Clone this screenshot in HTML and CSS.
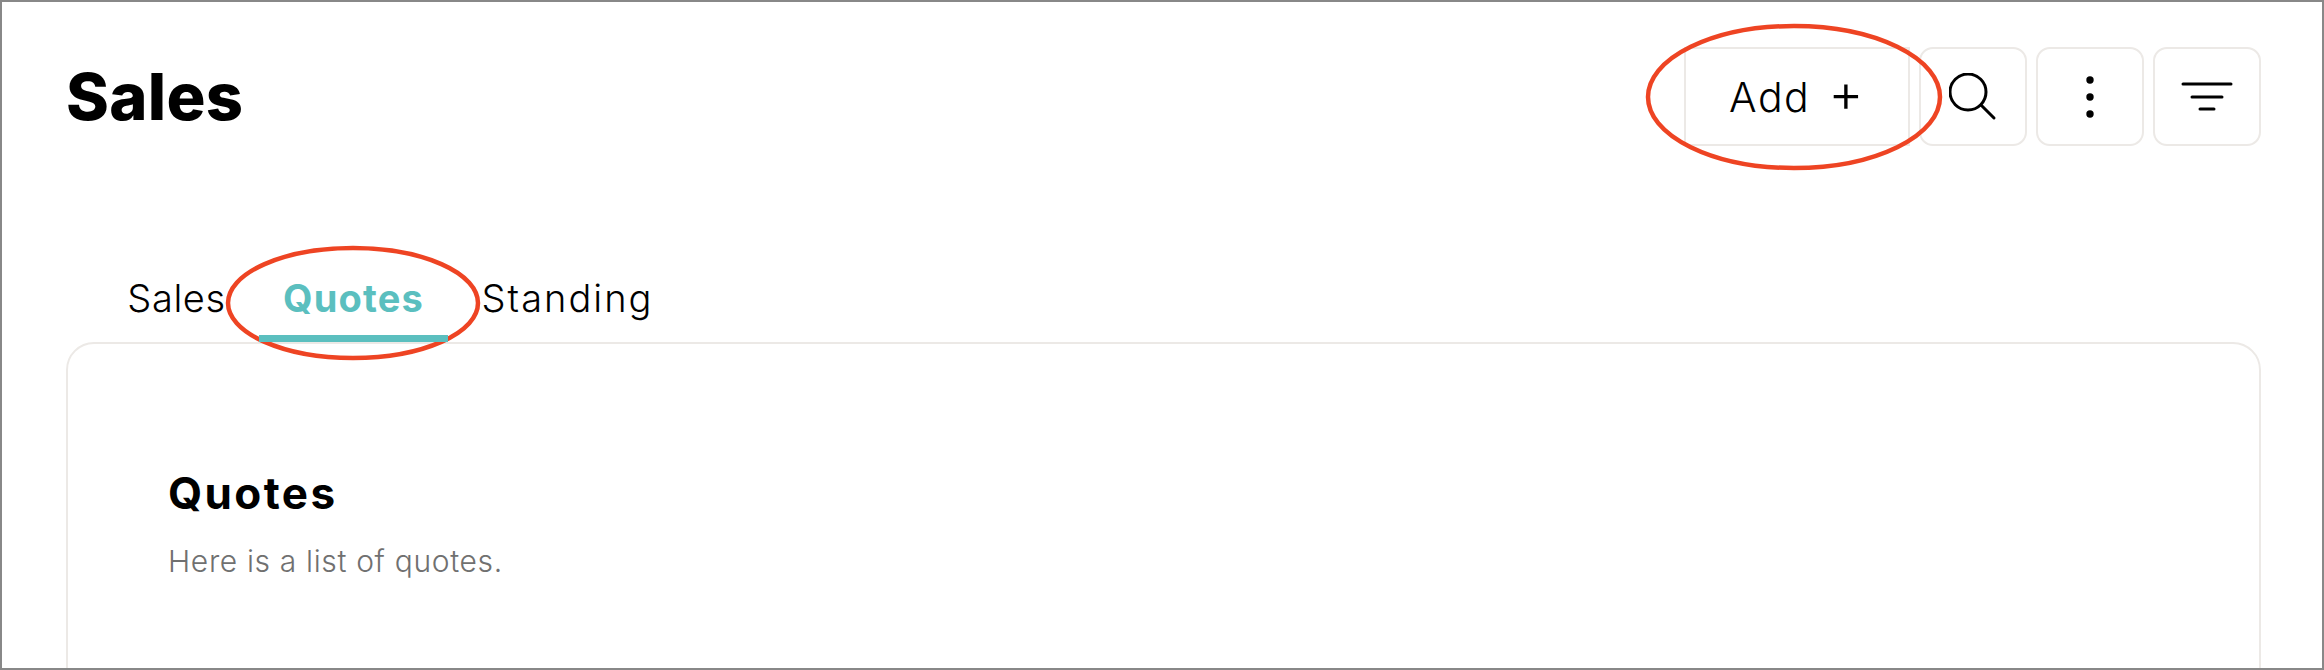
FILE: index.html
```html
<!DOCTYPE html>
<html lang="en">
<head>
    <meta charset="UTF-8">
    <meta name="viewport" content="width=device-width, initial-scale=1.0">
    <title>Sales</title>
    <link rel="stylesheet" href="styles.css">
</head>
<body>
    <div class="frame">
        <header class="page-header">
            <h1>Sales</h1>
            <div class="actions">
                <button class="action add-btn">Add <span class="plus">+</span></button>
                <button class="action icon-btn search-btn" aria-label="Search">
                    <svg width="52" height="52" viewBox="0 0 52 52" fill="none" stroke="#000" stroke-width="3" stroke-linecap="round">
                        <circle cx="19" cy="19" r="18"/>
                        <path d="M32 32 L45 45"/>
                    </svg>
                </button>
                <button class="action icon-btn" aria-label="More">
                    <svg width="10" height="44" viewBox="0 0 10 44" fill="#000">
                        <circle cx="5" cy="5" r="3.7"/>
                        <circle cx="5" cy="22" r="3.7"/>
                        <circle cx="5" cy="39" r="3.7"/>
                    </svg>
                </button>
                <button class="action icon-btn" aria-label="Filter">
                    <svg width="52" height="30" viewBox="0 0 52 30" fill="none" stroke="#000" stroke-width="3" stroke-linecap="round">
                        <path d="M2 2 H50"/>
                        <path d="M11 15 H41"/>
                        <path d="M19 27 H33"/>
                    </svg>
                </button>
            </div>
        </header>

        <nav class="tabs">
            <a class="tab tab-sales">Sales</a>
            <a class="tab tab-quotes active">Quotes</a>
            <a class="tab tab-standing">Standing</a>
        </nav>

        <section class="card">
            <h2>Quotes</h2>
            <p>Here is a list of quotes.</p>
        </section>

        <!-- red annotation rings -->
        <svg class="rings" width="2324" height="670" fill="none" stroke="#ee4423" stroke-width="4.5">
            <ellipse cx="1794" cy="97" rx="146" ry="71"/>
            <ellipse cx="353" cy="303" rx="125" ry="55"/>
        </svg>
    </div>
</body>
</html>
```

FILE: styles.css
```css
* {
    margin: 0;
    padding: 0;
    box-sizing: border-box;
    font-family: Inter, 'Noto Sans', sans-serif;
}

html, body {
    height: 100%;
    overflow: hidden;
    background: #fff;
    color: #000;
}

.frame {
    position: relative;
    height: 670px;
    border: 2px solid #888;
    padding: 45px 61px 0 64px;
    overflow: hidden;
}

.page-header {
    display: flex;
    justify-content: space-between;
    align-items: center;
    height: 99px;
}

h1 {
    font-size: 65px;
    font-weight: 800;
    letter-spacing: 0.3px;
}

.actions {
    display: flex;
    gap: 9px;
}

.action {
    display: flex;
    align-items: center;
    justify-content: center;
    height: 99px;
    width: 108px;
    background: #fff;
    border: 2px solid #ece9e6;
    border-radius: 14px;
}

.add-btn {
    width: 226px;
    border-radius: 0;
    font-size: 41px;
    font-weight: 300;
    letter-spacing: 1.5px;
    gap: 18px;
}

.plus {
    font-size: 54px;
    font-weight: 300;
    line-height: 1;
    margin-top: -8px;
}

.search-btn svg {
    margin: 4px 0 0 4px;
}

.tabs {
    display: flex;
    gap: 35px;
    margin: 96px 0 0 63px;
    height: 102px;
    align-items: stretch;
}

.tab {
    display: flex;
    justify-content: center;
    font-size: 38px;
    font-weight: 300;
    letter-spacing: 1.6px;
    padding-top: 33px;
    height: 100px;
    white-space: nowrap;
}

.tab-sales { width: 95px; letter-spacing: 0.6px; }
.tab-quotes { width: 189px; }
.tab-standing { width: 169px; letter-spacing: 2px; }

.tab.active {
    color: #5bbfbf;
    font-weight: 700;
    letter-spacing: 1.2px;
    border-bottom: 7px solid #5bbfbf;
    position: relative;
    z-index: 1;
}

.card {
    height: 500px;
    margin-top: -2px;
    border: 2px solid #ece9e6;
    border-radius: 28px;
    padding: 121px 0 0 100px;
}

.card h2 {
    font-size: 44px;
    font-weight: 700;
    letter-spacing: 2.4px;
    line-height: 56px;
}

.card p {
    margin-top: 21px;
    font-size: 30px;
    font-weight: 300;
    letter-spacing: 0.65px;
    color: #707070;
    line-height: 38px;
}

.rings {
    position: absolute;
    left: -2px;
    top: -2px;
    pointer-events: none;
}
```
